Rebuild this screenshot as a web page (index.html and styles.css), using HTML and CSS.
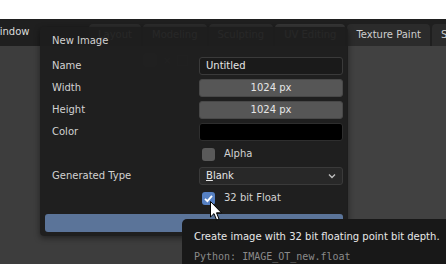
FILE: index.html
```html
<!DOCTYPE html>
<html lang="en">
<head>
    <meta charset="UTF-8">
    <meta name="viewport" content="width=device-width, initial-scale=1.0">
    <title>New Image</title>
    <link rel="stylesheet" href="styles.css">
</head>
<body>
    <div class="top-gap"></div>
    <div class="header">
        <div class="menu">Window</div>
        <div class="tabs">
            <div class="tab">Layout</div>
            <div class="tab">Modeling</div>
            <div class="tab">Sculpting</div>
            <div class="tab active">UV Editing</div>
            <div class="tab">Texture Paint</div>
            <div class="tab">Shading</div>
        </div>
    </div>
    <div class="main">
        <div class="pane left">
            <div class="subheader">
                <span class="icon-box"></span>
                <span class="icon-x">&times;</span>
                <span class="icon-grid"></span>
            </div>
        </div>
        <div class="pane right"></div>
    </div>

    <div class="popup">
        <div class="title">New Image</div>
        <div class="form">
            <div class="label">Name</div>
            <div class="field text">Untitled</div>
            <div class="label">Width</div>
            <div class="field number">1024 px</div>
            <div class="label">Height</div>
            <div class="field number">1024 px</div>
            <div class="label">Color</div>
            <div class="field color"></div>
            <div class="label"></div>
            <div class="check-row"><span class="box"></span>Alpha</div>
            <div class="label">Generated Type</div>
            <div class="field select"><span><u>B</u>lank</span>
                <svg class="chevron" width="8" height="6" viewBox="0 0 8 6"><path d="M1 1.5 L4 4.5 L7 1.5" fill="none" stroke="#bdbdbd" stroke-width="1.4"/></svg>
            </div>
            <div class="label"></div>
            <div class="check-row"><span class="box checked">
                <svg width="13" height="13" viewBox="0 0 13 13"><path d="M3 6.8 L5.4 9.2 L10 3.8" fill="none" stroke="#fff" stroke-width="1.8"/></svg>
            </span>32 bit Float</div>
        </div>
        <div class="ok-button"></div>
    </div>

    <div class="tooltip">
        <div class="tip-text">Create image with 32 bit floating point bit depth.</div>
        <div class="tip-python">Python: IMAGE_OT_new.float</div>
    </div>

    <svg class="cursor" width="13" height="21" viewBox="0 0 13 21">
        <path d="M0.5 0.5 L0.5 16 L4 12.6 L6.6 19 L9 18 L6.5 11.8 L11.5 11.8 Z" fill="#fff" stroke="#000" stroke-width="1"/>
    </svg>
</body>
</html>
```

FILE: styles.css
```css
body {
    margin: 0;
    width: 446px;
    height: 264px;
    overflow: hidden;
    background: #fff;
    font-family: 'DejaVu Sans', sans-serif;
    font-size: 10px;
    color: #d2d2d2;
    position: relative;
}
.top-gap {
    height: 19px;
    background: #fff;
}
.header {
    height: 27px;
    background: #1f1f1f;
    display: flex;
    align-items: flex-end;
    white-space: nowrap;
    overflow: hidden;
}
.menu {
    margin-left: -10px;
    width: 99px;
    flex-shrink: 0;
    align-self: center;
    padding-bottom: 2px;
    color: #dcdcdc;
}
.tabs {
    display: flex;
    height: 22px;
    gap: 2px;
}
.tab {
    flex-shrink: 0;
    padding: 0 9px;
    line-height: 21px;
    background: #2b2b2b;
    border-radius: 4px 4px 0 0;
    color: #cfcfcf;
}
.tab.active {
    background: #353535;
}
.main {
    display: flex;
    height: 218px;
    background: #161616;
    gap: 1px;
}
.pane {
    background: #3d3d3d;
}
.pane.left {
    width: 347px;
}
.pane.right {
    flex: 1;
    background: #414141;
}
.subheader {
    display: flex;
    align-items: center;
    gap: 6px;
    padding: 7px 0 0 143px;
}
.icon-box {
    width: 14px;
    height: 14px;
    background: #4a4a4a;
    border-radius: 2px;
}
.icon-x {
    color: #6a6a6a;
}
.icon-grid {
    width: 9px;
    height: 9px;
    border: 1px solid #555;
}

.popup {
    position: absolute;
    left: 40px;
    top: 27px;
    width: 298px;
    padding: 7px 5px 4px 5px;
    background: rgba(29, 29, 29, 0.95);
    border-radius: 4px;
    box-shadow: 0 2px 6px rgba(0, 0, 0, 0.45);
}
.title {
    height: 14px;
    line-height: 14px;
    padding-left: 7px;
    margin-bottom: 9px;
}
.form {
    display: grid;
    grid-template-columns: 147px 144px;
    grid-auto-rows: 18px;
    row-gap: 4px;
    padding-left: 7px;
}
.label {
    line-height: 18px;
}
.field {
    box-sizing: border-box;
    border-radius: 3px;
    line-height: 16px;
    border: 1px solid #3a3a3a;
    color: #e6e6e6;
}
.field.text {
    background: #1a1a1a;
    padding-left: 6px;
}
.field.number {
    background: #565656;
    border-color: #484848;
    text-align: center;
}
.field.color {
    background: #000;
    border-color: #2e2e2e;
}
.field.select {
    background: #282828;
    padding: 0 6px;
    display: flex;
    justify-content: space-between;
    align-items: center;
}
.check-row {
    display: flex;
    align-items: center;
    gap: 9px;
    padding-left: 3px;
    line-height: 18px;
}
.box {
    width: 13px;
    height: 13px;
    border-radius: 3px;
    background: #5a5a5a;
    display: flex;
}
.box.checked {
    background: #5680c2;
}
.ok-button {
    height: 18px;
    margin-top: 7px;
    background: #5b7499;
    border-radius: 3px;
}

.tooltip {
    position: absolute;
    left: 182px;
    top: 219px;
    width: 264px;
    height: 45px;
    box-sizing: border-box;
    padding: 11px 0 0 12px;
    background: #181818;
    border-radius: 5px 0 0 0;
    white-space: nowrap;
}
.tip-text {
    line-height: 14px;
    color: #e8e8e8;
}
.tip-python {
    margin-top: 6px;
    line-height: 14px;
    font-family: 'DejaVu Sans Mono', monospace;
    color: #8a8a8a;
}
.cursor {
    position: absolute;
    left: 210px;
    top: 201px;
}
```
